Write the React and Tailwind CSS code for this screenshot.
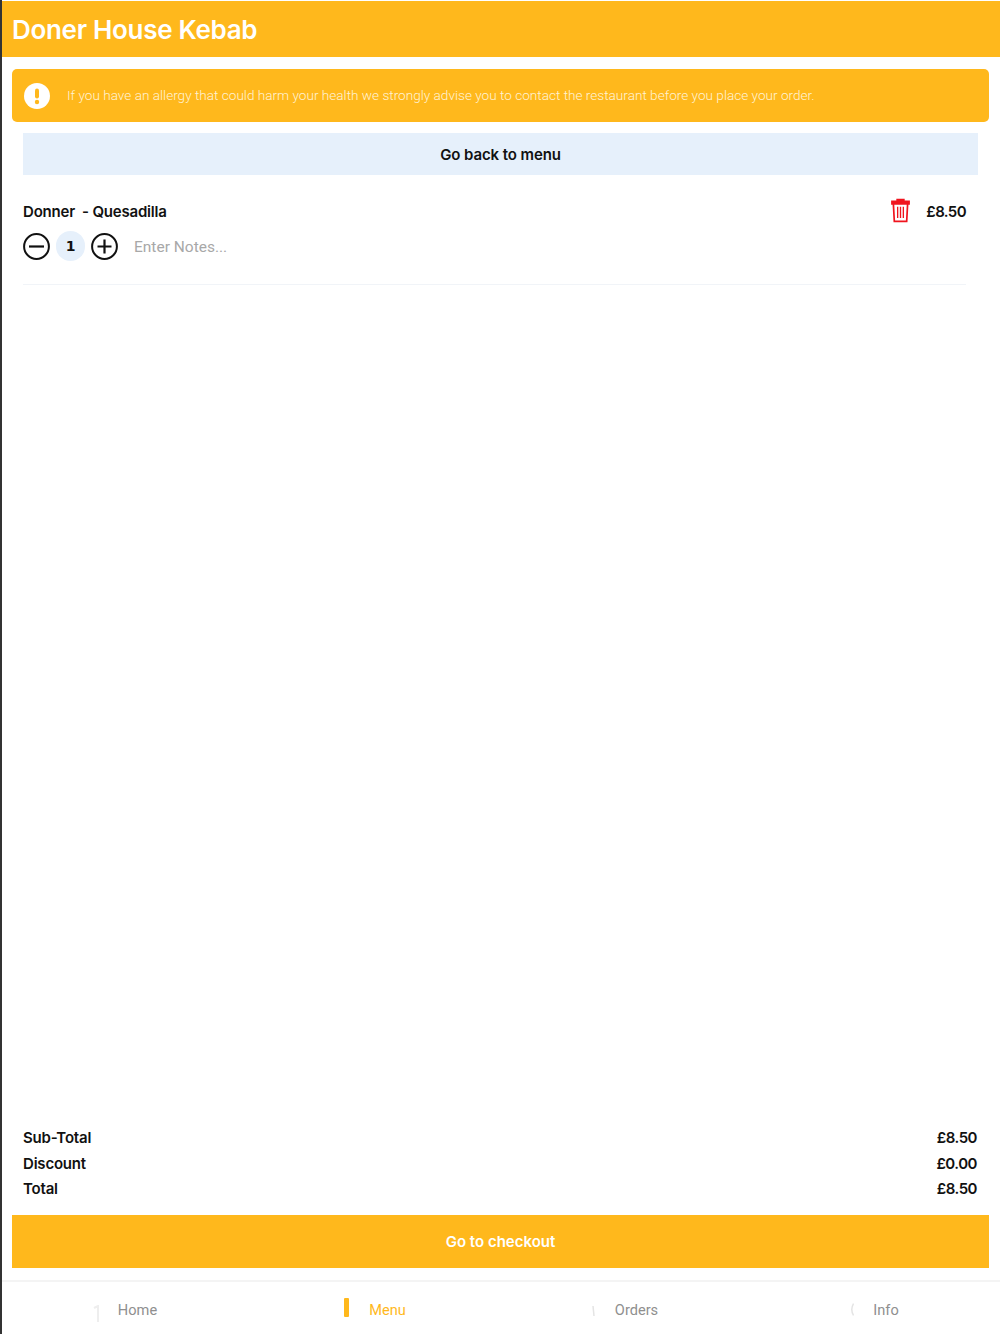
const sans = 'font-["Inter",sans-serif]'

function NavItem({ label, active, icon, gap }) {
  return (
    <div className="flex items-center justify-center">
      {icon}
      <span className={`${gap} font-["Roboto",sans-serif] text-[14.6px] leading-5 pt-[3px] ${active ? 'text-[#ffb81c]' : 'text-[#8f8f8f]'}`}>
        {label}
      </span>
    </div>
  )
}

function Row({ label, value }) {
  return (
    <div className="flex justify-between h-[25.5px] items-center text-[15px] font-semibold text-[#111] tracking-[-0.2px]">
      <span>{label}</span>
      <span className="tracking-[-0.5px] pr-px">{value}</span>
    </div>
  )
}

export default function App() {
  return (
    <div className={`${sans} h-[1334px] flex flex-col bg-white border-l-2 border-[#333] pt-px`}>
      {/* Header */}
      <div className="h-14 bg-[#ffb81c] flex items-center pl-[10px] shrink-0">
        <h1 className="text-[26px] font-semibold text-white tracking-[-0.3px]">Doner House Kebab</h1>
      </div>

      {/* Allergy notice */}
      <div className="mt-3 ml-[10px] mr-[11px] h-[53px] bg-[#ffb81c] rounded-[5px] flex items-center pl-[12px] shrink-0">
        <svg width="26" height="26" viewBox="0 0 26 26" className="shrink-0">
          <circle cx="13" cy="13" r="13" fill="#fff" />
          <rect x="11" y="5.5" width="4" height="10" rx="2" fill="#ffb81c" />
          <circle cx="13" cy="19" r="2.2" fill="#ffb81c" />
        </svg>
        <p className="ml-[17px] font-['Roboto',sans-serif] text-[13.6px] font-light text-[#fff3d6]">
          If you have an allergy that could harm your health we strongly advise you to contact the restaurant before you place your order.
        </p>
      </div>

      <div className="mt-[11px] ml-[21px] mr-[22px] h-[42px] pt-[2px] bg-[#e6f0fb] flex items-center justify-center text-[15px] font-semibold text-[#111] tracking-[-0.1px] shrink-0">
        Go back to menu
      </div>

      {/* Basket item */}
      <div className="ml-[21px] mr-[34px] pt-[27px] pb-[23px] border-b border-[#f1f4f8] shrink-0">
        <div className="flex items-center justify-between h-5">
          <span className="text-[15px] font-semibold text-[#111] tracking-[-0.2px]">Donner&nbsp; - Quesadilla</span>
          <div className="flex items-center gap-[16px]">
            <svg width="19" height="25" viewBox="0 0 20 26" fill="none" stroke="#f0141e" strokeWidth="1.8" className="-mt-[3px]">
              <path d="M6.5 3V1.5h7V3" fill="#f0141e" />
              <path d="M1 3.5h18v2.5H1z" fill="#f0141e" />
              <path d="M2.5 6l1 18.5h13l1-18.5" />
              <path d="M7 9v12M10 9v12M13 9v12" strokeWidth="1.4" />
            </svg>
            <span className="text-[15px] font-semibold text-[#111] tracking-[-0.6px]">£8.50</span>
          </div>
        </div>
        <div className="flex items-center mt-[9px] h-[30px]">
          <svg width="27" height="27" viewBox="0 0 27 27" fill="none" stroke="#111" strokeWidth="2">
            <circle cx="13.5" cy="13.5" r="12.4" />
            <path d="M6 13.5h15" strokeWidth="2.2" />
          </svg>
          <div className="ml-[6px] w-[29px] h-[30px] rounded-full bg-[#e6f0fb] flex items-center justify-center font-['DejaVu_Sans',sans-serif] text-sm font-bold text-[#111]">1</div>
          <svg width="27" height="27" viewBox="0 0 27 27" fill="none" stroke="#111" strokeWidth="2" className="ml-[6px]">
            <circle cx="13.5" cy="13.5" r="12.4" />
            <path d="M6.5 13.5h14M13.5 6.5v14" strokeWidth="2.2" />
          </svg>
          <span className="ml-[16px] pt-[3px] font-['Roboto',sans-serif] text-[15.5px] text-[#a8a8a8]">Enter Notes...</span>
        </div>
      </div>

      <div className="flex-1" />

      {/* Totals */}
      <div className="ml-[21px] mr-[22px] shrink-0">
        <Row label="Sub-Total" value="£8.50" />
        <Row label="Discount" value="£0.00" />
        <Row label="Total" value="£8.50" />
      </div>

      <div className="mt-[13px] ml-[10px] mr-[11px] h-[53px] pt-[2px] bg-[#ffb81c] flex items-center justify-center text-[15px] font-semibold text-white shrink-0">
        Go to checkout
      </div>

      {/* Bottom nav */}
      <div className="mt-3 h-[54px] border-t-2 border-[#f4f4f4] shrink-0">
        <div className="h-full grid grid-cols-4 -ml-[2px]">
          <NavItem
            label="Home"
            gap="ml-[18px]"
            icon={
              <svg width="7" height="17" viewBox="0 0 7 17" className="mt-[11px]">
                <path d="M1 3L5 1v16" fill="none" stroke="#eeeeee" strokeWidth="2" />
              </svg>
            }
          />
          <NavItem
            label="Menu"
            active
            gap="ml-[20px]"
            icon={<div className="w-[5px] h-[19px] -mt-[1px] rounded-[1px] bg-[#ffb81c]" />}
          />
          <NavItem
            label="Orders"
            gap="ml-[20px]"
            icon={
              <svg width="3" height="12" viewBox="0 0 3 12" className="mt-[5px]">
                <path d="M1 1l1 10" fill="none" stroke="#e4e4e4" strokeWidth="1.5" />
              </svg>
            }
          />
          <NavItem
            label="Info"
            gap="ml-[19px]"
            icon={
              <svg width="3" height="13" viewBox="0 0 3 13" className="mt-[3px]">
                <path d="M2.5 0.5C0.5 4 0.5 9 2.5 12.5" fill="none" stroke="#e4e4e4" strokeWidth="1.5" />
              </svg>
            }
          />
        </div>
      </div>
    </div>
  )
}
